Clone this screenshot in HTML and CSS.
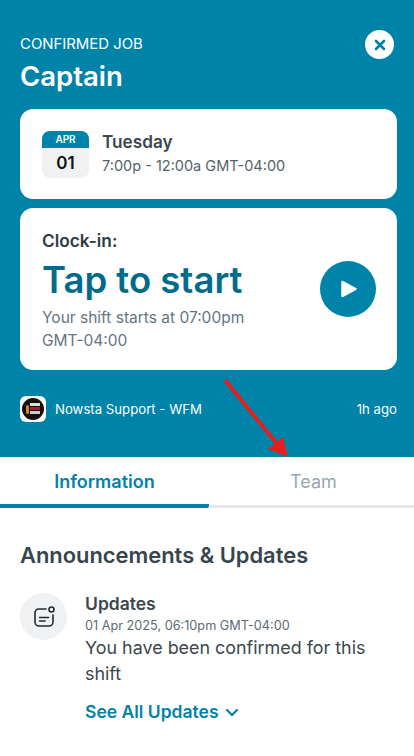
FILE: index.html
```html
<!DOCTYPE html>
<html lang="en">
<head>
    <meta charset="UTF-8">
    <meta name="viewport" content="width=device-width, initial-scale=1.0">
    <title>Confirmed Job</title>
    <link rel="stylesheet" href="styles.css">
</head>
<body>
    <header class="job-header">
        <div class="title-row">
            <div>
                <div class="job-status">CONFIRMED JOB</div>
                <h1 class="job-title">Captain</h1>
            </div>
            <button class="close-btn" aria-label="Close">
                <svg width="12" height="12" viewBox="0 0 12 12"><path d="M2 2l8 8M10 2l-8 8" stroke="#0083a8" stroke-width="2.600" stroke-linecap="round"/></svg>
            </button>
        </div>

        <section class="card date-card">
            <div class="calendar">
                <div class="calendar-month">APR</div>
                <div class="calendar-day">01</div>
            </div>
            <div>
                <div class="date-name">Tuesday</div>
                <div class="date-time">7:00p - 12:00a GMT-04:00</div>
            </div>
        </section>

        <section class="card clock-card">
            <div class="clock-text">
                <div class="clock-label">Clock-in:</div>
                <div class="clock-action">Tap to start</div>
                <div class="clock-note">Your shift starts at 07:00pm GMT-04:00</div>
            </div>
            <button class="play-btn" aria-label="Start">
                <svg width="18" height="20" viewBox="0 0 18 20"><path d="M3.500 3v14l13-7z" fill="#fff" stroke="#fff" stroke-width="2.500" stroke-linejoin="round"/></svg>
            </button>
        </section>

        <div class="poster-row">
            <div class="poster">
                <span class="poster-logo">
                    <svg width="22" height="22" viewBox="0 0 22 22">
                        <circle cx="11" cy="11" r="11" fill="#111"/>
                        <rect x="4" y="7" width="3" height="9" rx="1.500" fill="#d9822b"/>
                        <rect x="8" y="5" width="10" height="3" fill="#ddd"/>
                        <rect x="8" y="9" width="10" height="3" fill="#a3202a"/>
                        <rect x="8" y="13" width="10" height="3" fill="#ccc"/>
                    </svg>
                </span>
                <span>Nowsta Support - WFM</span>
            </div>
            <span>1h ago</span>
        </div>
    </header>

    <nav class="tabs">
        <div class="tab tab-active">Information</div>
        <div class="tab">Team</div>
    </nav>

    <main class="content">
        <h2 class="section-title">Announcements &amp; Updates</h2>
        <div class="update">
            <div class="update-icon">
                <svg width="24" height="24" viewBox="0 0 24 24" fill="none" stroke="#22292e" stroke-width="1.600" stroke-linecap="round">
                    <path d="M14 4H7a4 4 0 0 0-4 4v9a4 4 0 0 0 4 4h10a4 4 0 0 0 4-4v-7"/>
                    <circle cx="19.500" cy="4.500" r="2.500"/>
                    <path d="M7.500 12.500h9M7.500 16h5.500"/>
                </svg>
            </div>
            <div class="update-body">
                <div class="update-title">Updates</div>
                <div class="update-date">01 Apr 2025, 06:10pm GMT-04:00</div>
                <div class="update-text">You have been confirmed for this shift</div>
                <div class="see-all">
                    See All Updates
                    <svg width="14" height="9" viewBox="0 0 14 9" fill="none"><path d="M2 2l5 5 5-5" stroke="#0083a8" stroke-width="2.200" stroke-linecap="round" stroke-linejoin="round"/></svg>
                </div>
            </div>
        </div>
    </main>

    <svg class="arrow" width="414" height="470" viewBox="0 0 414 470">
        <path d="M225 380L277 444" stroke="#e4201f" stroke-width="4"/>
        <path d="M288 457L268 449L283 437z" fill="#e4201f"/>
    </svg>
</body>
</html>
```

FILE: styles.css
```css
* {
    box-sizing: border-box;
}

body {
    font-family: Inter, "Open Sans", sans-serif;
    background-color: #fff;
    margin: 0;
    padding: 0;
    height: 756px;
    overflow: hidden;
    position: relative;
}

button {
    border: none;
    padding: 0;
    cursor: pointer;
    display: flex;
    align-items: center;
    justify-content: center;
    border-radius: 50%;
}

.job-header {
    background-color: #0083a8;
    color: #fff;
    height: 457px;
    padding: 30px 17px 0 20px;
}

.title-row {
    display: flex;
    justify-content: space-between;
    padding-right: 3px;
    margin-bottom: 15px;
}

.job-status {
    font-size: 14.900px;
    line-height: 28px;
}

.job-title {
    font-size: 27.500px;
    line-height: 36px;
    font-weight: 600;
    margin: 0;
}

.close-btn {
    width: 29px;
    height: 29px;
    background-color: #fff;
}

.card {
    background-color: #fff;
    border-radius: 13px;
}

.date-card {
    height: 90px;
    padding: 22px;
    display: flex;
    align-items: center;
    gap: 13px;
    margin-bottom: 9px;
}

.calendar {
    width: 47px;
    height: 47px;
    border-radius: 8px;
    overflow: hidden;
    background-color: #f0f1f3;
    text-align: center;
}

.calendar-month {
    background-color: #0083a8;
    color: #fff;
    font-size: 10px;
    font-weight: 600;
    line-height: 17px;
}

.calendar-day {
    color: #111;
    font-size: 17px;
    font-weight: 600;
    line-height: 30px;
}

.date-name {
    color: #3c474e;
    font-size: 17.200px;
    font-weight: 600;
    line-height: 24px;
}

.date-time {
    color: #56626a;
    font-size: 14.500px;
    line-height: 24px;
}

.clock-card {
    height: 162px;
    padding: 20px 21px 20px 22px;
    display: flex;
    align-items: center;
    justify-content: space-between;
}

.clock-text {
    width: 215px;
    margin-top: 2px;
}

.clock-label {
    color: #2f3b42;
    font-size: 17.300px;
    font-weight: 600;
    line-height: 24px;
}

.clock-action {
    color: #006b8a;
    font-size: 36.500px;
    font-weight: 600;
    line-height: 44px;
    white-space: nowrap;
    margin: 5px 0 4px;
}

.clock-note {
    color: #64757f;
    font-size: 15.500px;
    line-height: 23px;
}

.play-btn {
    width: 56px;
    height: 56px;
    background-color: #0083a8;
}

.poster-row {
    display: flex;
    justify-content: space-between;
    align-items: center;
    margin-top: 26px;
    font-size: 13.200px;
}

.poster {
    display: flex;
    align-items: center;
    gap: 9px;
}

.poster-logo {
    width: 26px;
    height: 26px;
    background-color: #fff;
    border-radius: 6px;
    display: flex;
    align-items: center;
    justify-content: center;
}

.tabs {
    display: flex;
    height: 51px;
    overflow: hidden;
}

.tab {
    width: 209px;
    flex-shrink: 0;
    padding-top: 14px;
    text-align: center;
    font-size: 18px;
    color: #9aa7ae;
    border-bottom: 3px solid #e6e9eb;
}

.tab-active {
    color: #0083a8;
    font-weight: 600;
    border-bottom: 4px solid #0083a8;
    border-radius: 0 2px 2px 0;
}

.content {
    padding: 32px 20px 0;
}

.section-title {
    color: #37454d;
    font-size: 21.900px;
    font-weight: 600;
    line-height: 30px;
    margin: 0 0 23px;
}

.update {
    display: flex;
    gap: 18px;
}

.update-icon {
    width: 47px;
    height: 47px;
    flex-shrink: 0;
    border-radius: 50%;
    background-color: #f0f1f3;
    display: flex;
    align-items: center;
    justify-content: center;
}

.update-body {
    width: 290px;
    margin-top: -1px;
}

.update-title {
    color: #3c474e;
    font-size: 17.500px;
    font-weight: 600;
    line-height: 24px;
}

.update-date {
    color: #5d6a72;
    font-size: 12.700px;
    line-height: 19px;
}

.update-text {
    color: #3c474e;
    font-size: 17.900px;
    line-height: 26px;
}

.see-all {
    color: #0083a8;
    font-size: 17.500px;
    font-weight: 600;
    line-height: 26px;
    margin-top: 12px;
    display: flex;
    align-items: center;
    gap: 6px;
}

.arrow {
    position: absolute;
    top: 0;
    left: 0;
    pointer-events: none;
}
```
